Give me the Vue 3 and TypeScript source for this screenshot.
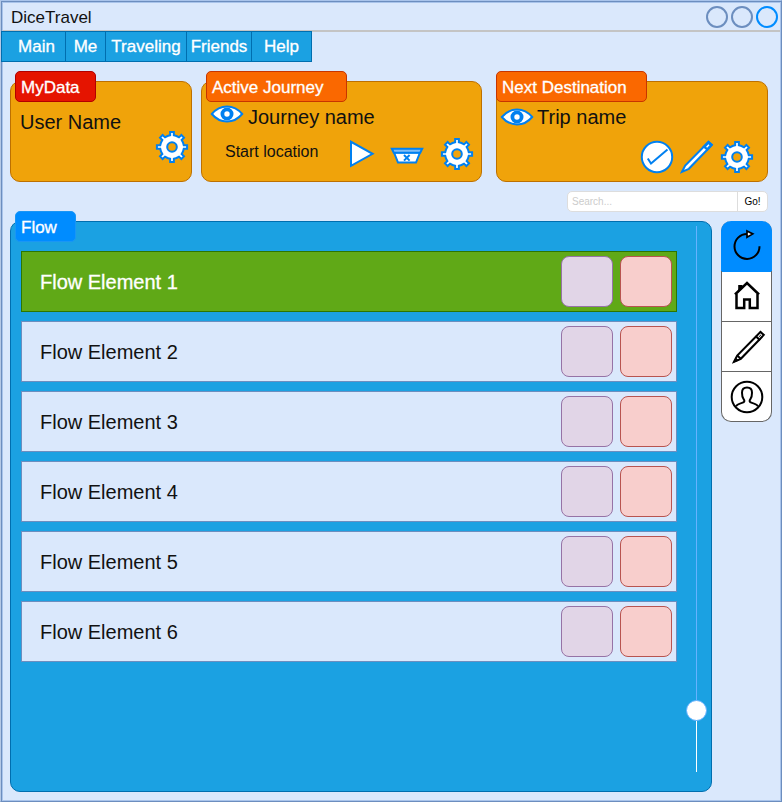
<script setup lang="ts">
import { ref } from 'vue'

interface MenuEntry {
  label: string
  width: number
}

const menu: MenuEntry[] = [
  { label: 'Main', width: 64 },
  { label: 'Me', width: 40 },
  { label: 'Traveling', width: 81 },
  { label: 'Friends', width: 65 },
  { label: 'Help', width: 60 },
]

const flow = ref<string[]>([1, 2, 3, 4, 5, 6].map((n) => `Flow Element ${n}`))
const active = ref(0)
const query = ref('')

// Outline of an eight-toothed gear centred on 17,17
function gearOutline(): string {
  const points: string[] = []
  const at = (radius: number, degrees: number) => {
    const a = (degrees * Math.PI) / 180
    points.push(`${(17 + radius * Math.cos(a)).toFixed(2)} ${(17 + radius * Math.sin(a)).toFixed(2)}`)
  }
  for (let i = 0; i < 8; i++) {
    const c = i * 45
    at(11.9, c - 9)
    at(15.2, c - 7)
    at(15.2, c + 7)
    at(11.9, c + 9)
    at(11.9, c + 22.5)
  }
  return `M${points.join('L')}Z`
}
const gear = gearOutline()
</script>

<template>
  <div class="window">
    <header class="titlebar">
      <span class="app-name">DiceTravel</span>
      <div class="controls">
        <i class="control"></i>
        <i class="control"></i>
        <i class="control current"></i>
      </div>
    </header>

    <nav class="menu">
      <a v-for="m in menu" :key="m.label" class="menu-item" :style="{ width: m.width + 'px' }">{{ m.label }}</a>
    </nav>

    <section class="cards">
      <article class="card user">
        <span class="tag red">MyData</span>
        <span class="name">User Name</span>
        <svg class="icon gear" viewBox="0 0 34 34">
          <path :d="gear" />
          <circle class="hole" cx="17" cy="17" r="4.8" />
        </svg>
      </article>

      <article class="card journey">
        <span class="tag">Active Journey</span>
        <div class="head">
          <svg class="icon eye" viewBox="0 0 34 18">
            <path d="M1.8 9C6 4 11 1.5 17 1.5S28 4 32.2 9C28 14 23 16.5 17 16.5S6 14 1.8 9Z" />
            <circle class="iris" cx="17" cy="9" r="4.6" />
          </svg>
          <span class="name">Journey name</span>
        </div>
        <div class="tools">
          <span class="place">Start location</span>
          <svg class="icon play" viewBox="0 0 26 30">
            <path d="M2 2.8V26.8L23.6 14.8Z" />
          </svg>
          <svg class="icon basket" viewBox="0 0 34 18">
            <path d="M4 5.5L8 15.5H26L30 5.5Z" />
            <path class="rim" d="M1.8 1.8H32.2L30.2 5.8H3.8Z" />
            <path class="line" d="M14 8L19.6 13.6M19.6 8L14 13.6" />
          </svg>
          <svg class="icon gear" viewBox="0 0 34 34">
            <path :d="gear" />
            <circle class="hole" cx="17" cy="17" r="4.8" />
          </svg>
        </div>
      </article>

      <article class="card trip">
        <span class="tag">Next Destination</span>
        <div class="head">
          <svg class="icon eye" viewBox="0 0 34 18">
            <path d="M1.8 9C6 4 11 1.5 17 1.5S28 4 32.2 9C28 14 23 16.5 17 16.5S6 14 1.8 9Z" />
            <circle class="iris" cx="17" cy="9" r="4.6" />
          </svg>
          <span class="name">Trip name</span>
        </div>
        <div class="tools">
          <svg class="icon check" viewBox="0 0 34 34">
            <circle cx="17" cy="17" r="15.2" />
            <path class="line" d="M7.8 18.5L11 23.5L27.5 9.5" />
          </svg>
          <svg class="icon pencil" viewBox="0 0 34 34">
            <path d="M2 31.8L5.2 25.6L24.5 6L28.5 1.9L31.8 4.9L28 9L8.8 28.8Z" />
            <path class="cap" d="M23.8 6.6L28.5 1.9L31.8 4.9L27.4 9.6Z" />
            <path class="glint" d="M26.6 7.2L29 4.8" />
          </svg>
          <svg class="icon gear" viewBox="0 0 34 34">
            <path :d="gear" />
            <circle class="hole" cx="17" cy="17" r="4.8" />
          </svg>
        </div>
      </article>
    </section>

    <form class="search" @submit.prevent>
      <input v-model="query" class="query" placeholder="Search..." />
      <button class="go">Go!</button>
    </form>

    <main class="content">
      <section class="panel">
        <span class="tag blue">Flow</span>
        <ul class="rows">
          <li v-for="(item, i) in flow" :key="item" class="row" :class="{ selected: i === active }" @click="active = i">
            <span class="row-label">{{ item }}</span>
            <i class="box violet"></i>
            <i class="box rose"></i>
          </li>
        </ul>
        <div class="slider">
          <i class="track"></i>
          <i class="knob"></i>
          <i class="track rest"></i>
        </div>
      </section>

      <aside class="side">
        <a class="side-item on">
          <svg viewBox="0 0 34 34">
            <path d="M29.500 17.200A12.500 12.500 0 1 1 17 4.900" />
            <path class="white" d="M17 1.900L22.800 4.900L17 8.300Z" stroke-width="1.700" />
          </svg>
        </a>
        <a class="side-item">
          <svg viewBox="0 0 34 34">
            <path d="M6.500 14V28H14.200V19.500H19.800V28H27.500V14M5 14.500L17 3L29 14.500" stroke-width="2.500" />
            <path class="solid" d="M8.200 5H12.500V8L8.200 12Z" />
          </svg>
        </a>
        <a class="side-item pen">
          <svg viewBox="0 0 34 34">
            <path d="M2 31.800L5.200 25.600L24.500 6L28.500 1.900L31.800 4.900L28 9L8.800 28.800Z" />
            <path d="M23.500 6L28 10.300M5.200 25.600L8.800 28.800" />
            <path d="M26.600 7.200L29 4.800" stroke-width="1" />
            <path class="solid" d="M1 33L3.600 27.500L7 30.500Z" />
          </svg>
        </a>
        <a class="side-item">
          <svg viewBox="0 0 34 34">
            <circle cx="17" cy="17" r="15.300" />
            <path
              d="M6 26.500C6.500 24.500 9.500 23.600 12 22.900C15 22 14.800 20.500 13.500 18.800C12.300 17.200 12 15 12 12.700C12 9.300 13.700 7.500 17 7.500S22 9.300 22 12.700C22 15 21.700 17.200 20.500 18.800C19.200 20.500 19 22 22 22.900C24.500 23.600 27.500 24.500 28 26.500"
            />
          </svg>
        </a>
      </aside>
    </main>
  </div>
</template>

<style>
body {
  margin: 0;
  background: #dae8fc;
}
</style>

<style scoped>
* {
  box-sizing: border-box;
}
.window {
  width: 782px;
  height: 802px;
  padding: 2px 0 0 2px;
  background: #dae8fc;
  border: 1px solid #6c8ebf;
  border-top-color: #a9c4eb;
  border-left-color: #b5c9e6;
  box-shadow: inset 1px 1px #6c8ebf, inset 2px 2px #a9c4eb, inset -1px -1px #a9c4eb;
  font-family: "Liberation Sans", Arial, sans-serif;
  color: #111;
  overflow: hidden;
}
.titlebar {
  display: flex;
  align-items: center;
  justify-content: space-between;
  height: 29px;
  padding: 0 2px 0 8px;
  border-bottom: 2px solid #c4c4c4;
  margin-right: 1px;
}
.app-name {
  font-size: 17px;
  margin-top: 2px;
}
.controls {
  display: flex;
  gap: 3px;
  margin-top: 1px;
}
.control {
  width: 22px;
  height: 22px;
  border: 2px solid #6c8ebf;
  border-radius: 50%;
}
.control.current {
  border-color: #008cff;
}
.menu {
  display: flex;
  width: 311px;
  height: 31px;
  margin: -1px 0 0 -2px;
  position: relative;
  background: #1ba1e2;
  border: 1px solid #006eaf;
  border-left: 0;
}
.menu-item {
  flex: none;
  border-left: 1px solid #006eaf;
  color: #fff;
  font-size: 17px;
  line-height: 29px;
  text-align: center;
  -webkit-text-stroke: 0.3px #fff;
}
.menu-item:first-child {
  padding-left: 6px;
}
.cards {
  display: flex;
  padding: 19px 0 0 7px;
}
.card {
  position: relative;
  height: 101px;
  background: #f0a30a;
  border: 1px solid #bd7000;
  border-radius: 10px;
}
.tag {
  position: absolute;
  top: -11px;
  left: 4px;
  width: 141px;
  height: 31px;
  padding-left: 5px;
  background: #fa6800;
  border: 1px solid #c73500;
  border-radius: 5px;
  color: #fff;
  font-size: 17px;
  line-height: 31px;
  white-space: nowrap;
  -webkit-text-stroke: 0.3px #fff;
}
.trip .tag {
  left: -1px;
  width: 151px;
}
.tag.red {
  width: 81px;
  background: #e51400;
  border-color: #b20000;
}
.tag.blue {
  width: 61px;
  background: #008cff;
  border-color: #1a96f5;
}
.user {
  display: flex;
  width: 182px;
  margin-right: 9px;
  padding: 28px 2.5px 0 9px;
  justify-content: space-between;
}
.journey {
  width: 281px;
  margin-right: 14px;
}
.trip {
  width: 272px;
}
.name {
  font-size: 20px;
  line-height: 24px;
  white-space: nowrap;
}
.user .gear {
  margin-top: 19.5px;
}
.head {
  display: flex;
  height: 24px;
  margin-top: 23px;
}
.journey .head {
  padding-left: 7.5px;
}
.trip .head {
  padding-left: 2.5px;
}
.head .eye {
  margin-right: 4.5px;
}
.trip .head .eye {
  margin: 2.5px 3.5px 0 0;
}
.tools {
  display: flex;
  align-items: center;
  height: 34px;
}
.journey .tools {
  margin-top: 7.5px;
  padding-left: 23px;
}
.trip .tools {
  justify-content: flex-end;
  margin-top: 10.5px;
  padding-right: 13.5px;
  gap: 6px;
}
.place {
  width: 124px;
  font-size: 16px;
  margin-top: -3px;
  white-space: nowrap;
}
.icon {
  display: block;
  flex: none;
  fill: #fff;
  stroke: #0080f0;
  stroke-width: 2;
}
.gear,
.check,
.pencil {
  width: 34px;
  height: 34px;
}
.eye,
.basket {
  width: 34px;
  height: 18px;
}
.play {
  width: 26px;
  height: 30px;
}
.basket {
  margin: 5px 16px 0 14.5px;
}
.hole {
  fill: #f0a30a;
}
.iris {
  stroke-width: 3.8;
}
.rim {
  fill: #80bdf5;
}
.line {
  fill: none;
}
.cap {
  fill: #0080f0;
}
.glint {
  stroke: #fff;
  stroke-width: 1.5;
}
.search {
  display: flex;
  width: 201px;
  height: 21px;
  margin: 9px 0 0 564px;
  background: #fff;
  border: 1px solid #ddd;
  border-radius: 5px;
  overflow: hidden;
}
.query,
.go {
  border: 0;
  padding: 0;
  background: none;
  font: 10px "Liberation Sans", Arial, sans-serif;
}
.query {
  width: 169px;
  padding-left: 4px;
}
.query::placeholder {
  color: #ccc;
  opacity: 1;
}
.go {
  flex: 1;
  border-left: 1px solid #ddd;
  color: #000;
}
.content {
  display: flex;
  gap: 9px;
  margin: 9px 0 0 7px;
  align-items: flex-start;
}
.panel {
  position: relative;
  display: flex;
  width: 702px;
  height: 571px;
  padding: 29px 4px 0 10px;
  background: #1ba1e2;
  border: 1px solid #006eaf;
  border-radius: 10px;
}
.rows {
  display: flex;
  flex-direction: column;
  gap: 9px;
  width: 656px;
  margin: 0;
  padding: 0;
  list-style: none;
}
.row {
  display: flex;
  align-items: center;
  height: 61px;
  padding: 0 4px 0 18px;
  background: #dae8fc;
  border: 1px solid #6c8ebf;
  font-size: 20px;
}
.row.selected {
  background: #60a917;
  border-color: #2d7600;
  color: #fff;
  -webkit-text-stroke: 0.3px #fff;
}
.row-label {
  flex: 1;
  padding-top: 2px;
}
.box {
  width: 52px;
  height: 51px;
  border: 1px solid;
  border-radius: 8px;
}
.violet {
  background: #e1d5e7;
  border-color: #9673a6;
  margin-right: 7px;
}
.rose {
  background: #f8cecc;
  border-color: #b85450;
}
.slider {
  display: flex;
  flex-direction: column;
  align-items: center;
  width: 21px;
  margin: -25px 0 0 9px;
}
.track {
  width: 1px;
  height: 474px;
  background: #66b2ff;
}
.track.rest {
  height: 51px;
  background: #fff;
}
.knob {
  width: 21px;
  height: 21px;
  background: #fff;
  border: 1px solid #66b2ff;
  border-radius: 50%;
}
.side {
  width: 51px;
  height: 201px;
  background: #fff;
  border: 1px solid #666;
  border-top: 0;
  border-radius: 10px;
}
.side-item {
  display: flex;
  align-items: center;
  justify-content: center;
  height: 50px;
  border-top: 1px solid #666;
}
.side-item.on {
  margin: 0 -1px;
  background: #008cff;
  border-top: 0;
  border-radius: 10px 10px 0 0;
}
.side-item.on + .side-item {
  border-top-color: #008cff;
}
.side-item.pen {
  padding-left: 5px;
}
.side-item svg {
  width: 34px;
  height: 34px;
  fill: none;
  stroke: #000;
  stroke-width: 2;
}
.side-item .white {
  fill: #fff;
}
.side-item .solid {
  fill: #000;
  stroke: none;
}
</style>
